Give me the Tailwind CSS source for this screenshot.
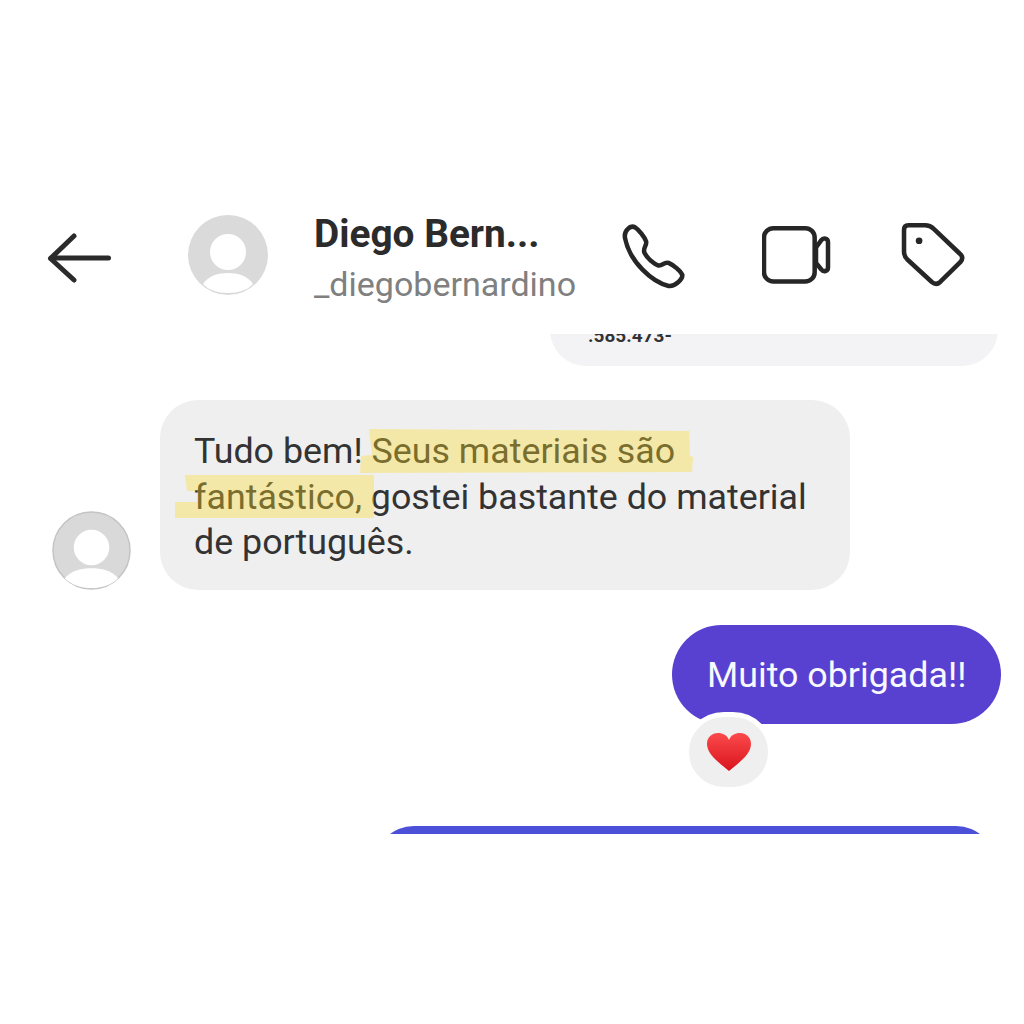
<!DOCTYPE html>
<html lang="pt">
<head>
    <meta charset="UTF-8">
    <meta name="viewport" content="width=device-width, initial-scale=1.0">
    <title>Conversa</title>
    <script src="https://cdn.jsdelivr.net/npm/@tailwindcss/browser@4"></script>
</head>
<body class="bg-white font-['Roboto',sans-serif]">
<div class="w-[1024px] h-[1024px] overflow-hidden flex flex-col">

    <!-- header -->
    <div class="flex items-center h-[120px] mt-[195px] mb-[19px]">
        <svg class="ml-[44px] mt-[4px] w-[72px] h-[72px]" viewBox="0 0 72 72" fill="none" stroke="#2b2b2b" stroke-width="5" stroke-linecap="round" stroke-linejoin="round">
            <path d="M7 37H64.5"/>
            <path d="M30 15L6.500 37.500L30 59"/>
        </svg>
        <svg class="ml-[72px] w-[80px] h-[80px]" viewBox="0 0 80 80">
            <circle cx="40" cy="40" r="40" fill="#dadada"/>
            <circle cx="40" cy="37" r="18" fill="#fff"/>
            <path d="M15 69C20 61 30 58 40 58C50 58 60 61 65 69C60 75 50 78 40 78C30 78 20 75 15 69Z" fill="#fff"/>
        </svg>
        <div class="ml-[46px] mt-[4px] w-[308px] flex flex-col gap-[7px]">
            <div class="text-[38.800px] leading-[46px] font-bold text-[#2b2b2b]">Diego Bern...</div>
            <div class="text-[34px] leading-[40px] text-[#808080]">_diegobernardino</div>
        </div>
        <svg class="-ml-[3px] w-[67px] h-[67px]" viewBox="60 60 200 200" fill="none" stroke="#262626" stroke-width="13.500" stroke-linejoin="round">
            <path d="M78 108C74 88 92 68 108 76C118 82 136 104 141 118C144 130 130 138 136 152C144 168 164 186 178 190C190 192 194 178 208 182C222 188 244 206 249 218C250 232 226 254 208 251C160 240 92 180 78 108Z"/>
        </svg>
        <svg class="ml-[76px] mt-[4px] w-[71px] h-[67px]" viewBox="488 72 213 200" fill="none" stroke="#262626" stroke-width="13.500" stroke-linejoin="round">
            <rect x="494" y="84" width="152" height="160" rx="28"/>
            <path d="M650 142L666 120C672 112 686 114 686 126V202C686 214 672 216 666 208L650 188Z"/>
        </svg>
        <svg class="ml-[67px] w-[67px] h-[67px]" viewBox="900 66 200 200" fill="none" stroke="#262626" stroke-width="13.500" stroke-linejoin="round">
            <path d="M925 76H975Q990 76 1000 86L1078 160Q1092 172 1080 186L1020 245Q1008 256 995 245L922 178Q912 168 912 155V90Q912 76 925 76Z"/>
            <circle cx="957" cy="122" r="10" fill="#262626" stroke="none"/>
        </svg>
    </div>

    <!-- messages -->
    <div class="h-[500px] overflow-hidden flex flex-col">
        <div class="ml-[550px] w-[448px] h-[100px] -mt-[68px] shrink-0 rounded-b-[36px] bg-[#f3f3f5] flex items-end pl-[38px] pb-[21px]">
            <span class="text-[19px] leading-[18px] font-bold text-[#333]">.585.473-</span>
        </div>

        <div class="flex items-end mt-[34px] ml-[52px] shrink-0">
            <svg class="w-[79px] h-[79px]" viewBox="0 0 80 80">
                <circle cx="40" cy="40" r="39" fill="#d9d9d9" stroke="#c4c4c4" stroke-width="1.500"/>
                <circle cx="40" cy="37" r="18" fill="#fff"/>
                <path d="M13 68C20 60 30 58 40 58C50 58 60 60 67 68C60 75 50 78 40 78C30 78 20 75 13 68Z" fill="#fff"/>
            </svg>
            <div class="relative ml-[29px] w-[690px] h-[190px] rounded-[38px] bg-[#efefef] pl-[34px] pt-[29px] text-[35.800px] leading-[45.500px] text-[#333]">
                Tudo bem! Seus materiais são<br>fantástico, gostei bastante do material<br>de português.
                <!-- marker highlight over the text -->
                <svg class="absolute left-0 top-0 w-[690px] h-[190px]" viewBox="0 0 690 190" fill="#ffdc25" fill-opacity="0.35">
                    <path d="M209 29L529 31L530 56L533 57L532 72L200 73L201 56L212 55Z"/>
                    <path d="M25 75H214V118H15V102H37V91H27Z"/>
                </svg>
            </div>
        </div>

        <div class="relative self-end mt-[35px] mr-[23px] w-[329px] h-[99px] shrink-0 rounded-[50px] bg-[#5841d0] pl-[35px] pt-[2px] flex items-center text-[35.800px] text-[#f8f8ff]">
            Muito obrigada!!
            <div class="absolute left-[12px] top-[87px] w-[89px] h-[80px] rounded-full border-[5px] border-white bg-[#efefef] flex items-center justify-center">
                <svg class="w-[46px] h-[40px]" viewBox="0 0 46 40">
                    <defs>
                        <linearGradient id="heart" x1="0" y1="0" x2="0" y2="1">
                            <stop offset="0" stop-color="#fb4a4c"/>
                            <stop offset="1" stop-color="#d9141c"/>
                        </linearGradient>
                    </defs>
                    <path d="M23 39C15 32 1 23 1 12C1 5 6 1 12 1C17 1 21 3 23 8C25 3 29 1 34 1C40 1 45 5 45 12C45 23 31 32 23 39Z" fill="url(#heart)"/>
                </svg>
            </div>
        </div>

        <div class="ml-[374px] mt-[102px] w-[622px] h-[80px] shrink-0 rounded-[50px] bg-[#4c50d8]"></div>
    </div>
</div>
</body>
</html>
